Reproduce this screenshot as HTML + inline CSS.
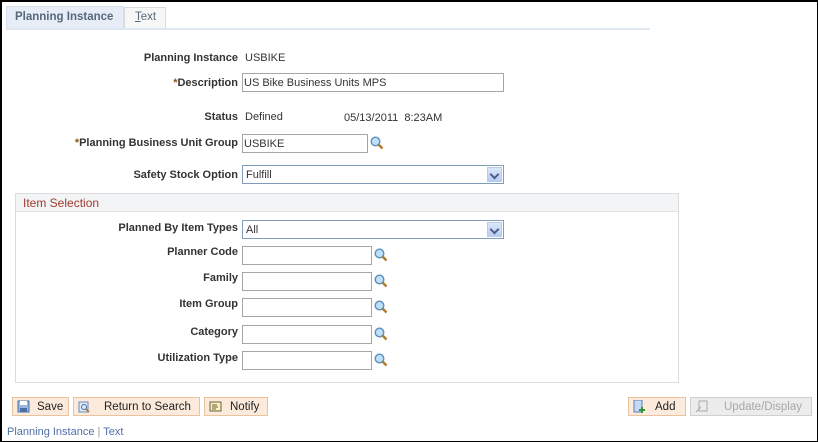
<!DOCTYPE html>
<html><head><style>
*{box-sizing:border-box;margin:0;padding:0}
body{width:818px;height:442px;position:relative;background:#fff;font-family:"Liberation Sans",Arial,sans-serif;font-size:11px;color:#333;overflow:hidden}
.frame{position:absolute;left:0;top:0;width:818px;height:442px;border:1px solid #000;border-top:2px solid #000;border-left:2px solid #000}
.a{position:absolute;white-space:nowrap}
.lbl{position:absolute;font-weight:bold;text-align:right;right:580px;white-space:nowrap}
.in{position:absolute;height:19px;border:1px solid #a6a6a6;padding:3px 1px 0;background:#fff}
.sel{position:absolute;height:19px;border:1px solid #7f9db9;padding:3px 3px 0;background:#fff}
.dd{position:absolute;right:1px;top:1px;width:15px;height:15px;background:linear-gradient(#dbe7fb,#b7cdf2);border:1px solid #b9cbe8}
.dd:after{content:"";position:absolute;left:3px;top:3px;width:5px;height:5px;border-right:2px solid #4d6185;border-bottom:2px solid #4d6185;transform:rotate(45deg)}
.mg{position:absolute;width:14px;height:14px}
.btn{position:absolute;top:397px;height:19px;border:1px solid #e8c39e;background:#fcebdc;font-size:11.5px;line-height:18px;color:#222}
.ic{position:absolute;left:4px;top:2px;width:13px;height:13px}
</style></head><body>
<div class="frame"></div>
<div class="a" style="left:6px;top:6px;width:118px;height:23px;background:#e6edf7;border:1px solid #d6dfea;border-bottom:none"></div>
<div class="a" style="left:15px;top:11px;font-weight:bold;color:#59677a;font-size:11.5px">Planning Instance</div>
<div class="a" style="left:124px;top:7px;width:42px;height:22px;background:#f7f7f7;border:1px solid #d9d9d9;border-bottom:none"></div>
<div class="a" style="left:135px;top:11px;color:#59677a;font-size:11.5px"><u>T</u>ext</div>
<div class="a" style="left:6px;top:28px;width:644px;height:2px;background:#dfe7f1"></div>

<div class="lbl" style="top:52px">Planning Instance</div><div class="a" style="left:245px;top:52px">USBIKE</div>
<div class="lbl" style="top:77px"><span style="color:#8a5a10">*</span>Description</div>
<div class="in" style="left:242px;top:73px;width:262px">US Bike Business Units MPS</div>
<div class="lbl" style="top:111px">Status</div><div class="a" style="left:245px;top:111px">Defined</div><div class="a" style="left:344px;top:112px">05/13/2011&nbsp;&nbsp;8:23AM</div>
<div class="lbl" style="top:137px"><span style="color:#8a5a10">*</span>Planning Business Unit Group</div>
<div class="in" style="left:242px;top:134px;width:126px">USBIKE</div>
<svg class="mg" style="left:370px;top:136px" viewBox="0 0 14 14"><circle cx="5.5" cy="5.5" r="4.3" fill="#bfe0f8" stroke="#5b8fbf" stroke-width="1.4"/><path d="M8.5 8.5L12.5 12.5" stroke="#b07a2a" stroke-width="2.4"/></svg>
<div class="lbl" style="top:169px">Safety Stock Option</div>
<div class="sel" style="left:242px;top:165px;width:262px">Fulfill<div class="dd"></div></div>

<div class="a" style="left:15px;top:193px;width:664px;height:190px;border:1px solid #dcdcdc"></div>
<div class="a" style="left:16px;top:194px;width:662px;height:18px;background:#f2f4f5;border-bottom:1px solid #e2e2e2"></div>
<div class="a" style="left:23px;top:196px;color:#a13a2e;font-size:12px">Item Selection</div>

<div class="lbl" style="top:222px">Planned By Item Types</div>
<div class="sel" style="left:242px;top:220px;width:262px">All<div class="dd"></div></div>
<div class="lbl" style="top:246px">Planner Code</div><div class="in" style="left:242px;top:246px;width:130px"></div>
<div class="lbl" style="top:272px">Family</div><div class="in" style="left:242px;top:272px;width:130px"></div>
<div class="lbl" style="top:298px">Item Group</div><div class="in" style="left:242px;top:298px;width:130px"></div>
<div class="lbl" style="top:326px">Category</div><div class="in" style="left:242px;top:325px;width:130px"></div>
<div class="lbl" style="top:352px">Utilization Type</div><div class="in" style="left:242px;top:351px;width:130px"></div>
<svg class="mg" style="left:374px;top:248px" viewBox="0 0 14 14"><circle cx="5.5" cy="5.5" r="4.3" fill="#bfe0f8" stroke="#5b8fbf" stroke-width="1.4"/><path d="M8.5 8.5L12.5 12.5" stroke="#b07a2a" stroke-width="2.4"/></svg>
<svg class="mg" style="left:374px;top:274px" viewBox="0 0 14 14"><circle cx="5.5" cy="5.5" r="4.3" fill="#bfe0f8" stroke="#5b8fbf" stroke-width="1.4"/><path d="M8.5 8.5L12.5 12.5" stroke="#b07a2a" stroke-width="2.4"/></svg>
<svg class="mg" style="left:374px;top:300px" viewBox="0 0 14 14"><circle cx="5.5" cy="5.5" r="4.3" fill="#bfe0f8" stroke="#5b8fbf" stroke-width="1.4"/><path d="M8.5 8.5L12.5 12.5" stroke="#b07a2a" stroke-width="2.4"/></svg>
<svg class="mg" style="left:374px;top:327px" viewBox="0 0 14 14"><circle cx="5.5" cy="5.5" r="4.3" fill="#bfe0f8" stroke="#5b8fbf" stroke-width="1.4"/><path d="M8.5 8.5L12.5 12.5" stroke="#b07a2a" stroke-width="2.4"/></svg>
<svg class="mg" style="left:374px;top:353px" viewBox="0 0 14 14"><circle cx="5.5" cy="5.5" r="4.3" fill="#bfe0f8" stroke="#5b8fbf" stroke-width="1.4"/><path d="M8.5 8.5L12.5 12.5" stroke="#b07a2a" stroke-width="2.4"/></svg>

<div class="btn" style="left:12px;width:57px"><svg class="ic" viewBox="0 0 13 13"><rect x="1" y="1" width="11" height="11" fill="#9bb8e0" stroke="#4a6fa5"/><rect x="3" y="1" width="7" height="4" fill="#fff"/><rect x="3" y="8" width="7" height="4" fill="#4a6fa5"/></svg><span style="position:absolute;left:24px">Save</span></div>
<div class="btn" style="left:73px;width:127px"><svg class="ic" viewBox="0 0 13 13"><rect x="1" y="2" width="9" height="10" fill="#dce8f7" stroke="#6a8ab5"/><circle cx="6" cy="7" r="2.5" fill="none" stroke="#4a6fa5"/><path d="M8 9l3 3" stroke="#a07030" stroke-width="1.5"/></svg><span style="position:absolute;left:30px">Return to Search</span></div>
<div class="btn" style="left:204px;width:64px"><svg class="ic" viewBox="0 0 13 13"><rect x="1" y="2" width="11" height="9" fill="#f7f0c8" stroke="#6d6030"/><path d="M3 5h5M3 7h6M3 9h4" stroke="#6d6030"/></svg><span style="position:absolute;left:25px">Notify</span></div>
<div class="btn" style="left:628px;width:58px"><svg class="ic" viewBox="0 0 13 13"><rect x="1" y="0" width="8" height="12" fill="#c7d8f2" stroke="#5a7fb8"/><path d="M9 7v6M6 10h6" stroke="#2e9a2e" stroke-width="2"/></svg><span style="position:absolute;left:26px">Add</span></div>
<div class="btn" style="left:690px;width:122px;background:#ececec;border-color:#cfcfcf;color:#a8a8a8"><svg class="ic" viewBox="0 0 13 13"><rect x="4" y="1" width="8" height="10" fill="none" stroke="#aaa"/><path d="M1 12l5-5" stroke="#aaa"/></svg><span style="position:absolute;left:33px">Update/Display</span></div>

<div class="a" style="left:7px;top:426px;color:#5070a8">Planning Instance <span style="color:#999">|</span> Text</div>
</body></html>
